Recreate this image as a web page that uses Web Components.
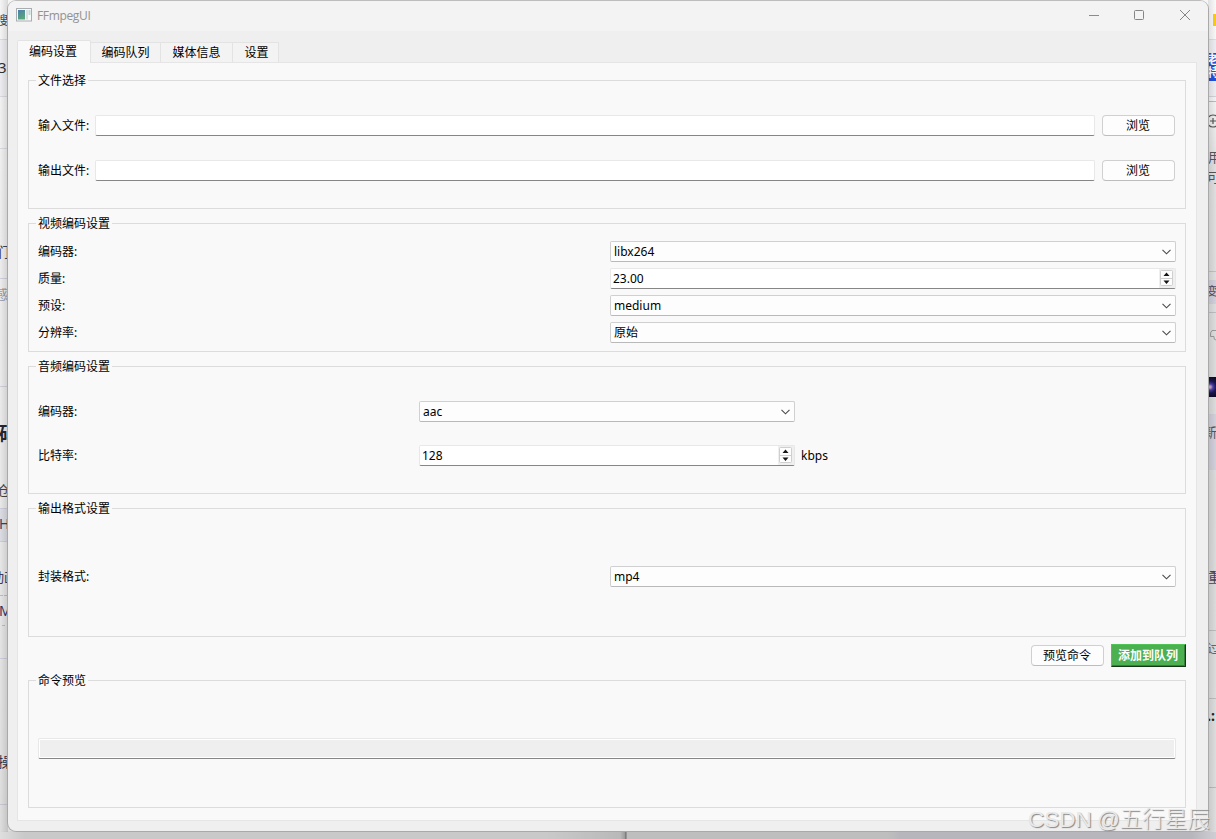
<!DOCTYPE html>
<html lang="zh-CN">
<head>
<meta charset="utf-8">
<title>FFmpegUI</title>
<style>
   html, body {
      margin: 0;
      width: 1216px;
      height: 839px;
      overflow: hidden;
   }
   body {
      font: 12px/16px "Noto Sans", "Noto Sans CJK SC", sans-serif;
      color: #000;
   }
</style>
</head>
<body>

<desktop-area>
   <app-window caption="FFmpegUI">
      <tab-strip slot="tabs">
         <tab-item active style="--w: 74px">编码设置</tab-item>
         <tab-item style="--w: 70px">编码队列</tab-item>
         <tab-item style="--w: 72px">媒体信息</tab-item>
         <tab-item style="--w: 46px; --shift: 2px">设置</tab-item>
      </tab-strip>

      <group-box legend="文件选择" style="--h: 129px; --top: 34px; --gap: 24px">
         <form-row label="输入文件:" style="--label: 57px; --end: 10px">
            <line-edit></line-edit>
            <push-button>浏览</push-button>
         </form-row>
         <form-row label="输出文件:" style="--label: 57px; --end: 10px">
            <line-edit></line-edit>
            <push-button>浏览</push-button>
         </form-row>
      </group-box>

      <group-box legend="视频编码设置" style="--h: 129px; --top: 17px; --gap: 6px">
         <form-row label="编码器:"><combo-box>libx264</combo-box></form-row>
         <form-row label="质量:"><spin-box>23.00</spin-box></form-row>
         <form-row label="预设:"><combo-box>medium</combo-box></form-row>
         <form-row label="分辨率:"><combo-box>原始</combo-box></form-row>
      </group-box>

      <group-box legend="音频编码设置" style="--h: 128px; --top: 34px; --gap: 23px">
         <form-row label="编码器:" style="--label: 381px; --field: 0 0 376px">
            <combo-box>aac</combo-box>
         </form-row>
         <form-row label="比特率:" style="--label: 381px; --field: 0 0 376px">
            <spin-box>128</spin-box><span>kbps</span>
         </form-row>
      </group-box>

      <group-box legend="输出格式设置" style="--h: 129px; --top: 57px">
         <form-row label="封装格式:"><combo-box>mp4</combo-box></form-row>
      </group-box>

      <action-bar>
         <push-button>预览命令</push-button>
         <push-button primary>添加到队列</push-button>
      </action-bar>

      <group-box legend="命令预览" style="--h: 128px; --top: 57px">
         <form-row style="--label: 0px"><line-edit readonly></line-edit></form-row>
      </group-box>
   </app-window>
   <water-mark slot="over">CSDN @五行星辰</water-mark>
</desktop-area>

<script>
// attaches an open shadow root with the given markup
function define(name, html, setup) {
   const tmpl = document.createElement("template");
   tmpl.innerHTML = html;

   customElements.define(name, class extends HTMLElement {
      constructor() {
         super();
         this.attachShadow({ mode: "open" });
         this.shadowRoot.appendChild(tmpl.content.cloneNode(true));
      }
      connectedCallback() {
         if (setup) setup(this, this.shadowRoot);
      }
   });
}

// what shows of the pages behind the window: [x, y, w, h, background]
const leftBlocks = [
   [0, 40, 8, 57, "#ededf1"], [0, 39, 8, 1, "#d9d9de"], [0, 96, 8, 1, "#d9d9e0"],
   [0, 148, 8, 1, "#d9d9e0"], [0, 278, 8, 1, "#d0d0de"], [0, 386, 8, 1, "#d0d0dc"],
   [0, 508, 8, 34, "#dcdce4"], [0, 508, 8, 1, "#ccccda"], [0, 541, 8, 1, "#ccccda"],
   [0, 595, 3, 1, "#bbb"], [4, 595, 3, 1, "#bbb"], [2, 625, 3, 1, "#bbb"],
   [0, 658, 8, 1, "#ccccda"], [0, 804, 8, 1, "#c8c8d0"],
];
const rightBlocks = [
   [5, 14, 3, 12, "#fccb16"], [0, 39, 8, 1, "#dcdce0"], [0, 40, 8, 57, "#ededf1"],
   [0, 96, 8, 1, "#d0d0d8"], [0, 101, 8, 1, "#b8b8b8"], [0, 53, 8, 28, "#2450da"],
   [0, 271, 8, 1, "#c0c0c4"], [0, 280, 8, 24, "#d0cfda"], [0, 312, 8, 1, "#bcbcc2"],
   [0, 377, 8, 20, "radial-gradient(circle at 2px 10px, #c9a0c8 0 1px, #4a41a8 3px, #1b1650 6px, #090718)"],
   [0, 414, 8, 56, "#d0cfda"], [0, 630, 8, 1, "#bcbcbe"],
   [0, 698, 8, 1, "#bcbcbe"], [0, 787, 8, 1, "#b8b8b8"],
];
// [text, x, centre y, size, colour, weight]
const leftTexts = [
   ["搜", -4, 21, 12, "#444", 400], ["3,", -2, 67, 15, "#333", 400],
   ["们", -5, 252, 14, "#3b4260", 400], ["感", -5, 294, 13, "#999aa5", 400],
   ["码", -1, 434, 19, "#222630", 700], ["仓", -3, 490, 13, "#444", 400],
   ["H", -1, 524, 14, "#2f4668", 400], ["动画", -9, 577, 13, "#3b3960", 400],
   ["M", -1, 611, 14, "#36305c", 400], ["操", -2, 762, 14, "#343248", 400],
];
const rightTexts = [
   ["老", -1, 60, 12, "#fff", 700], ["特", -1, 73, 12, "#fff", 700],
   ["用", 0, 157, 13, "#555", 400], ["可", -1, 177, 13, "#555", 400],
   ["变", -2, 292, 12, "#4c4a66", 400], ["新", -4, 432, 13, "#555", 400],
   ["重", 0, 577, 13, "#4a4550", 400], ["过", -1, 648, 13, "#666", 400],
   [".:", -1, 716, 14, "#222", 700],
];

define("desktop-area", `
   <style>
      :host {
         display: block;
         position: relative;
         box-sizing: border-box;
         width: 1216px;
         height: 839px;
         padding-left: 7px;
         overflow: hidden;
         background: linear-gradient(#f6f6f7, #eeeeef 25%, #e9e9ea 60%, #dededf);
      }
      .side, .below {
         position: absolute;
         overflow: hidden;
      }
      .side {
         top: 0;
         width: 8px;
         height: 832px;
      }
      .left { left: 0; }
      .right {
         left: 1208px;
         background: linear-gradient(#fafafa, #f2f2f3 12%, #dfdfe0 20%, #dadadb 60%, #dededf);
      }
      .side::after {
         content: "";
         position: absolute;
         inset: 0;
         background: linear-gradient(90deg, transparent, rgba(0,0,0,0.12));
      }
      .right::after {
         background: linear-gradient(270deg, transparent, rgba(0,0,0,0.1));
      }
      .below {
         left: 0;
         top: 831px;
         width: 1216px;
         height: 8px;
         background: linear-gradient(90deg, #dedede, #c9c9c9 2% 45%, #b9b9b9 51%, #9a9a9a 51.4%, #777 51.45% 51.5%, #bebebe 51.55% 73%, #b7b6bc 74% 98%, #cfced4);
      }
      i, b {
         position: absolute;
         font-style: normal;
         white-space: nowrap;
      }
      svg {
         position: absolute;
         left: 0;
         fill: none;
      }
   </style>
   <div class="below"></div>
   <div class="side left"></div>
   <div class="side right">
      <svg style="top: 113px" width="8" height="16" stroke="#555" stroke-width="1.2"><circle cx="5" cy="8" r="6"/><path d="M2 8h6M5 5v6"/></svg>
      <svg style="top: 328px" width="8" height="14" stroke="#999"><path d="M8 2.500H4Q2 4 2.500 8.500H6Q5.500 12 8 12"/></svg>
   </div>
   <slot></slot>
   <slot name="over"></slot>
`, (el, root) => {
   const fill = (side, blocks, texts) => {
      const icons = side.querySelector("svg");
      for (const [x, y, w, h, bg] of blocks) {
         const block = document.createElement("i");
         block.style.cssText = `left:${x}px;top:${y}px;width:${w}px;height:${h}px;background:${bg}`;
         side.insertBefore(block, icons);
      }
      for (const [text, x, y, size, color, weight] of texts) {
         const word = document.createElement("b");
         word.textContent = text;
         word.style.cssText = `left:${x}px;top:${y - size / 2}px;font:${weight} ${size}px/${size}px "Noto Sans","Noto Sans CJK SC",sans-serif;color:${color}`;
         side.appendChild(word);
      }
   };
   fill(root.querySelector(".left"), leftBlocks, leftTexts);
   fill(root.querySelector(".right"), rightBlocks, rightTexts);
});

define("app-window", `
   <style>
      :host {
         display: flex;
         flex-direction: column;
         position: relative;
         box-sizing: border-box;
         width: 1202px;
         height: 832px;
         border: 1px solid #a9a9a9;
         border-top-color: #bdbdbd;
         border-radius: 9px;
         overflow: hidden;
         background: #efefef;
      }
      header {
         display: flex;
         align-items: center;
         box-sizing: border-box;
         height: 30px;
         padding: 0 16px 2px 8px;
         background: #f3f3f3;
         color: #929292;
      }
      h1 {
         flex: 1;
         margin: 2px 0 0 5px;
         font: 12px/16px "Open Sans", sans-serif;
         letter-spacing: -0.35px;
      }
      .controls {
         display: flex;
         gap: 33px;
         margin-right: 1px;
      }
      .controls svg:not(:last-child) {
         margin: 0 1px 0 -1px;
      }
      svg { display: block; }
      main {
         display: flex;
         flex-direction: column;
         box-sizing: border-box;
         width: 1180px;
         height: 759px;
         margin-left: 9px;
         padding: 17px 10px 0;
         border: 1px solid #e5e5e5;
         background: #f9f9f9;
      }
      ::slotted(group-box) { margin-bottom: 14px; }
      ::slotted(group-box:nth-of-type(4)) { margin-bottom: 7px; }
   </style>
   <header>
      <svg width="16" height="14" viewBox="0 0 16 14">
         <defs><linearGradient id="g" x2="0.4" y2="1"><stop stop-color="#4c7fae"/><stop offset="1" stop-color="#57a779"/></linearGradient></defs>
         <rect x="0.5" y="0.5" width="15" height="12.500" fill="#f7f8fa" stroke="#a9adb1"/>
         <rect x="2" y="2" width="7" height="9.500" fill="url(#g)"/>
         <rect x="10" y="2" width="2" height="9.500" fill="#d9e1e5"/>
         <rect x="12.500" y="2" width="2" height="5" fill="#c5d9d4"/>
      </svg>
      <h1></h1>
      <div class="controls">
         <svg width="12" height="12" stroke="#8b8b8b"><path d="M1 6.500h10"/></svg>
         <svg width="12" height="12" stroke="#858585" fill="none"><rect x="1.500" y="1.500" width="9" height="9" rx="1"/></svg>
         <svg width="12" height="12" stroke="#858585"><path d="M1 1l10 10M11 1l-10 10"/></svg>
      </div>
   </header>
   <slot name="tabs"></slot>
   <main><slot></slot></main>
`, (el, root) => {
   root.querySelector("h1").textContent = el.getAttribute("caption");
});

define("tab-strip", `
   <style>
      :host {
         display: flex;
         align-items: flex-end;
         height: 22px;
         margin: 9px 0 0 9px;
         position: relative;
         z-index: 1;
      }
   </style>
   <slot></slot>
`);

define("tab-item", `
   <style>
      :host {
         box-sizing: border-box;
         width: var(--w);
         height: 20px;
         padding: 1px 0 0 var(--shift, 0);
         border: solid #e3e3e3;
         border-width: 1px 1px 0 0;
         background: #f3f3f3;
         text-align: center;
         line-height: 18px;
      }
      :host([active]) {
         height: 23px;
         margin-bottom: -1px;
         padding: 2px 2px 0 0;
         border-left-width: 1px;
         border-radius: 2px 2px 0 0;
         background: #f9f9f9;
      }
   </style>
   <slot></slot>
`);

define("group-box", `
   <style>
      :host {
         display: flex;
         flex-direction: column;
         flex: none;
         gap: var(--gap, 0);
         box-sizing: border-box;
         height: var(--h);
         border: 1px solid #dcdcdc;
      }
      .legend {
         align-self: flex-start;
         height: 16px;
         margin: -8px 0 calc(var(--top) - 8px - var(--gap, 0px)) 7px;
         padding: 0 2px;
         background: #f9f9f9;
      }
   </style>
   <div class="legend"></div>
   <slot></slot>
`, (el, root) => {
   root.querySelector(".legend").textContent = el.getAttribute("legend");
});

define("form-row", `
   <style>
      :host {
         display: flex;
         align-items: center;
         height: 21px;
         padding: 0 var(--end, 9px) 0 9px;
      }
      label {
         flex: none;
         width: var(--label, 572px);
      }
      ::slotted(push-button) { margin-left: 7px; }
      ::slotted(span) { margin-left: 6px; }
   </style>
   <label></label>
   <slot></slot>
`, (el, root) => {
   root.querySelector("label").textContent = el.getAttribute("label") || "";
});

define("line-edit", `
   <style>
      :host {
         flex: 1;
         box-sizing: border-box;
         height: 21px;
         border: 1px solid #e8e8e8;
         border-bottom-color: #868686;
         border-radius: 2px;
         background: #fff;
      }
      :host([readonly]) {
         background: #efefef;
         box-shadow: inset 0 0 0 1px #fff;
      }
   </style>
`);

define("combo-box", `
   <style>
      :host {
         display: flex;
         flex: var(--field, 1);
         align-items: center;
         justify-content: space-between;
         box-sizing: border-box;
         height: 21px;
         padding: 0 4px 0 3px;
         border: 1px solid #d0d0d0;
         border-bottom-color: #b9b9b9;
         border-radius: 2px;
         background: #fdfdfd;
      }
   </style>
   <span><slot></slot></span>
   <svg width="9" height="6" fill="none" stroke="#4a4a4a" stroke-width="1.1"><path d="M0.500 0.800l4 4 4-4"/></svg>
`);

define("spin-box", `
   <style>
      :host {
         display: flex;
         flex: var(--field, 1);
         align-items: center;
         justify-content: space-between;
         box-sizing: border-box;
         height: 21px;
         padding-left: 2px;
         border: 1px solid #e8e8e8;
         border-bottom-color: #868686;
         border-radius: 2px;
         background: #fff;
      }
      svg { display: block; }
   </style>
   <span><slot></slot></span>
   <svg width="16" height="19">
      <rect width="16" height="19" fill="#efefef"/>
      <rect x="1.500" y="1.500" width="12" height="15" rx="1" fill="#fdfdfd" stroke="#cfcfcf"/>
      <path d="M2 9.500h11" stroke="#cfcfcf"/>
      <path d="M4.500 7h6L7.500 3.500zM4.500 11.500h6L7.500 15z" fill="#151515"/>
   </svg>
`);

define("push-button", `
   <style>
      :host {
         flex: none;
         box-sizing: border-box;
         width: 73px;
         height: 21px;
         padding-right: 1px;
         border: 1px solid #d0d0d0;
         border-bottom-color: #bdbdbd;
         border-radius: 4px;
         background: #fdfdfd;
         text-align: center;
         line-height: 19px;
      }
      :host([primary]) {
         width: 75px;
         height: 23px;
         border: 1px solid #4fc454;
         border-right-color: #163818;
         border-bottom-color: #163818;
         border-radius: 0;
         box-shadow: inset -1px -1px #358039;
         background: #4caf50;
         color: #fff;
         font-weight: 700;
         line-height: 21px;
      }
   </style>
   <slot></slot>
`);

define("action-bar", `
   <style>
      :host {
         display: flex;
         align-items: center;
         justify-content: flex-end;
         gap: 7px;
         height: 23px;
         margin-bottom: 13px;
      }
   </style>
   <slot></slot>
`);

define("water-mark", `
   <style>
      :host {
         position: absolute;
         left: 1028px;
         top: 806px;
         font: 22.500px/28px "Liberation Sans", "Noto Sans CJK SC", sans-serif;
         font-weight: 300;
         word-spacing: -1px;
         white-space: nowrap;
         color: #e9e9e9;
         text-shadow: 1px 1px 1px #858585;
      }
   </style>
   <slot></slot>
`);
</script>
</body>
</html>
